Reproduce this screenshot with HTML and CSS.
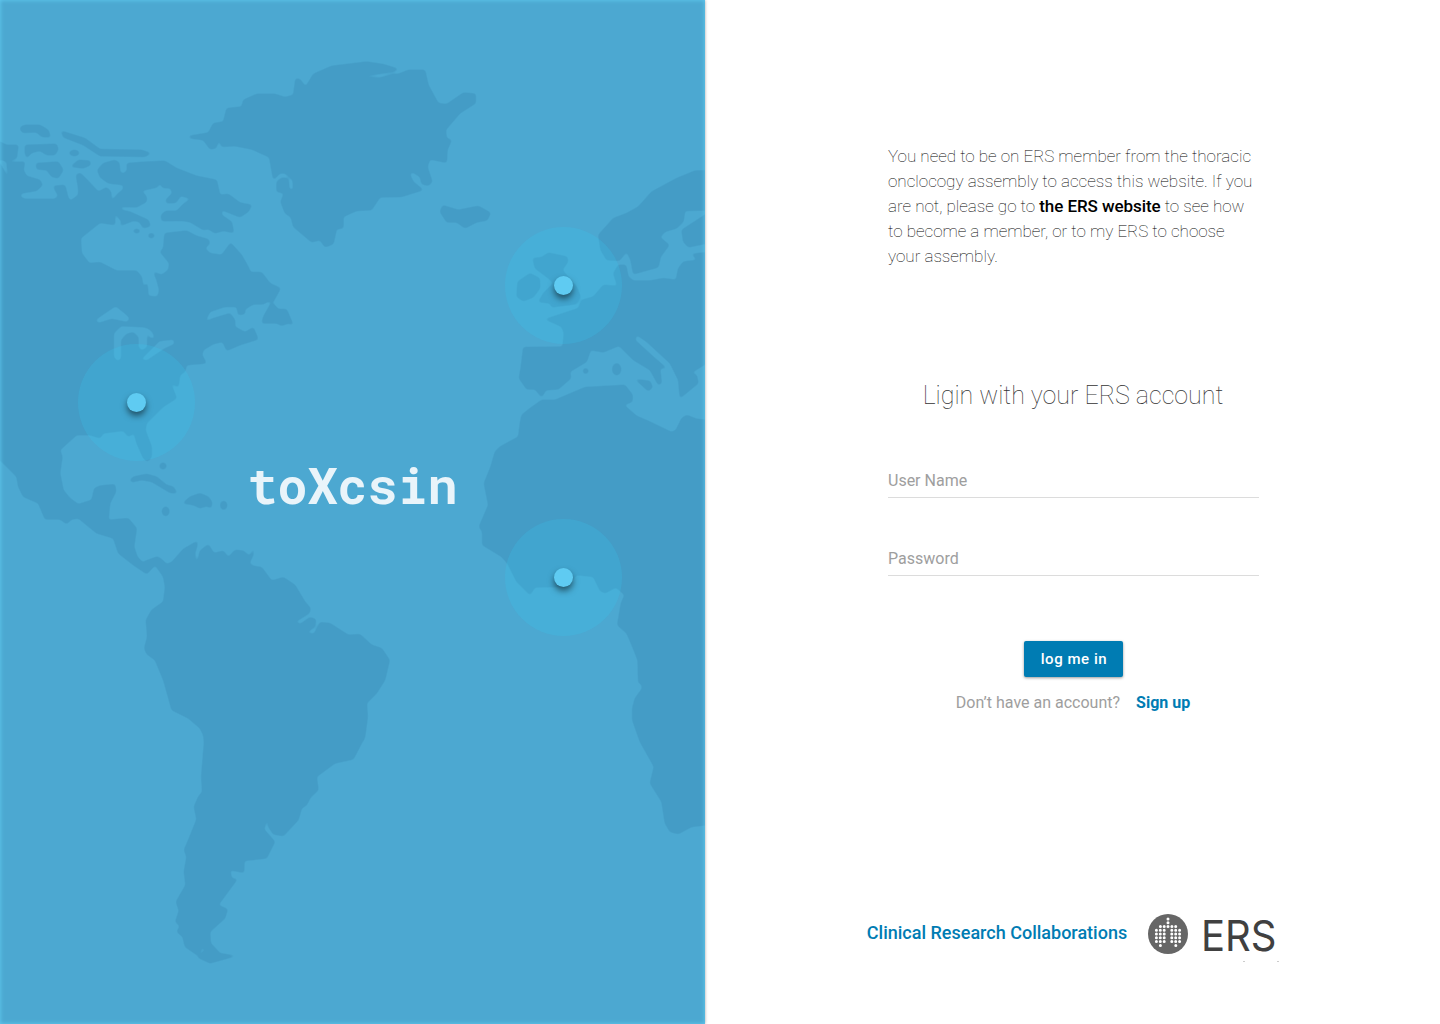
FILE: index.html
```html
<!DOCTYPE html>
<html lang="en">
<head>
<meta charset="utf-8">
<title>toXcsin</title>
<link rel="stylesheet" href="styles.css">
</head>
<body>
<main class="page">
  <section class="hero">
    <svg class="map" viewBox="0 0 2115 3072" aria-hidden="true">
      <defs>
      <!-- rounds off the coastline corners -->
      <filter id="round" filterUnits="userSpaceOnUse" x="-50" y="-50" width="2215" height="3172" color-interpolation-filters="sRGB">
        <feGaussianBlur stdDeviation="4.5"/>
        <feComponentTransfer>
          <feFuncR type="linear" slope="3" intercept="-.75"/>
          <feFuncG type="linear" slope="3" intercept="-.75"/>
          <feFuncB type="linear" slope="3" intercept="-.75"/>
        </feComponentTransfer>
      </filter>
      <mask id="continents" maskUnits="userSpaceOnUse" x="0" y="0" width="2115" height="3072">
      <g filter="url(#round)">
      <rect class="water" x="-50" y="-50" width="2215" height="3172"/>
      <!-- Canada and the Arctic -->
      <g transform="translate(0 300)">
        <g class="land">
          <path d="M-40 190L0 190L25 235L20 187L75 185L70 210L80 228L120 240L128 255L110 272L65 280L60 290L75 297L165 297L175 288L165 270L160 258L195 255L205 295L212 302L235 285L235 265L228 225L240 218L262 240L295 275L320 262L333 275L335 302L355 280L370 268L370 255L325 250L300 232L292 210L310 190L345 180L358 188L360 215L370 222L382 210L380 190L440 185L495 183L530 205L590 228L650 240L660 285L685 282L720 308L756 315L745 335L720 352L690 340L665 330L665 345L695 365L702 400L692 428L725 465L745 500L752 517L785 517L810 550L842 565L820 605L-40 605Z"/>
          <path d="M62 80L75 75L120 75L145 90L152 112L125 110L110 97L68 98L60 88Z"/>
          <path d="M-40 125L0 125L20 135L55 135L50 175L20 187L10 180L-40 178Z"/>
          <path d="M75 135L170 132L175 148L165 165L140 165L120 152L95 158L80 175L75 160Z"/>
          <path d="M108 190L175 185L190 210L175 235L155 230L140 210L110 208Z"/>
          <path d="M183 92L255 115L300 148L425 150L453 160L435 170L300 168L250 135L190 112Z"/>
          <path d="M212 200L235 180L270 182L272 195L250 205Z"/>
          <ellipse cx="223" cy="159" rx="15" ry="9"/>
        </g>
        <path class="water" d="M480 248L487 263L512 265L517 280L497 300L500 310L528 308L542 287L572 296L550 312L530 333L497 333L483 345L485 363L545 362L570 366L610 390L625 387L645 400L670 392L706 400L692 428L665 465L630 460L615 445L630 430L625 418L590 408L560 392L494 400L490 445L480 455L508 490L505 510L485 525L460 515L470 540L478 570L473 590L445 588L442 548L430 560L425 530L410 512L350 512L300 487L268 490L245 460L242 415L300 368L345 375L345 340L365 365L360 378L400 362L418 365L430 385L452 378L445 360L390 335L365 330L362 320L410 322L440 305L440 290L425 272L472 262Z"/>
        <g class="land"><ellipse cx="410" cy="393" rx="10" ry="6"/><ellipse cx="454" cy="407" rx="9" ry="7"/></g>
      </g>
      <!-- United States, Central America, Caribbean -->
      <g transform="translate(0 900)">
        <g class="land">
          <path d="M-40 -5L820 -5L810 0L790 13L760 13L735 28L735 42L715 45L710 20L675 20L630 35L615 65L640 55L690 40L705 60L705 80L735 97L760 82L775 118L720 135L680 152L668 125L640 132L610 150L606 165L620 190L560 195L555 215L540 225L535 262L513 250L530 295L490 320L440 370L436 390L455 440L455 470L443 485L430 475L410 430L402 400L385 410L370 392L310 400L300 415L270 405L230 405L180 450L187 470L180 520L190 570L210 595L235 613L275 600L283 565L300 557L345 553L348 575L330 610L325 660L385 655L410 685L402 740L412 770L430 790L475 770L500 795L520 785L520 860L497 870L490 830L465 795L440 822L400 795L355 760L340 715L290 700L235 655L215 658L200 672L180 658L135 658L115 610L70 590L55 560L50 530L0 480L-40 470Z"/>
          <path d="M815 5L835 28L860 28L880 75L865 70L845 77L830 70L785 70L790 50Z"/>
          <path d="M390 540L400 530L440 522L470 530L500 555L520 560L532 580L510 578L480 560L455 545L425 540L395 547Z"/>
          <path d="M548 610L570 590L600 580L625 590L636 605L634 625L620 618L600 625L580 615Z"/>
          <circle cx="489" cy="498" r="10"/><ellipse cx="497" cy="634" rx="11" ry="14"/><ellipse cx="671" cy="616" rx="10" ry="13"/>
        </g>
        <g class="water">
          <path d="M286 60L310 43L347 18L377 42L390 55L382 67L335 57L295 70Z"/>
          <path d="M341 100L363 78L430 81L447 86L460 100L464 117L450 114L442 100L442 142L425 152L415 142L415 112L400 97L380 102L364 120L364 177L352 184L341 172Z"/>
          <path d="M423 178L453 148L478 123L522 118L524 132L492 147L440 182Z"/>
        </g>
      </g>
      <!-- Greenland and Iceland -->
      <g class="land" transform="translate(540 120)">
        <path d="M26 288L85 278L100 250L130 245L140 205L185 200L190 180L230 162L285 162L315 172L340 165L347 115L360 118L377 140L400 102L455 78L560 65L610 73L656 87L640 95L540 110L600 113L640 102L655 102L685 90L735 90L745 135L775 190L800 193L850 158L887 161L887 190L840 220L797 270L800 295L815 300L802 330L800 368L750 358L742 380L757 425L745 437L725 432L720 410L695 395L690 405L700 425L730 450L665 470L600 472L575 510L530 512L490 530L490 565L470 567L460 612L435 622L420 600L395 607L340 560L333 532L315 520L302 485L312 460L290 455L290 425L305 413L325 415L328 448L340 450L338 420L315 400L300 400L280 420L268 352L215 328L165 318L125 320L117 300L108 325L90 328L70 300L30 295Z"/>
        <path d="M780 515L788 496L835 510L895 498L932 518L922 541L890 547L855 565L830 547L800 547Z"/>
      </g>
      <!-- South America -->
      <g class="land" transform="translate(360 1590)">
        <path d="M70 95L110 80L125 88L140 103L155 97L190 57L232 33L232 45L225 70L228 98L235 85L240 62L265 43L282 70L310 62L325 82L345 60L370 62L388 78L402 55L400 75L388 100L400 108L425 112L455 152L490 142L525 165L555 215L572 235L568 250L527 275L540 283L570 262L588 268L585 290L560 308L582 312L600 277L630 280L685 315L720 313L755 345L785 355L809 390L795 450L770 490L740 520L743 560L735 620L730 633L252 633L250 615L240 595L205 565L155 540L147 510L130 450L105 390L80 372L73 355L82 320L78 270L95 240L130 215L137 160L120 110L105 105L80 132Z"/>
      </g>
      <g class="land" transform="translate(420 2220)">
        <path d="M670 0L640 58L585 70L530 110L535 150L512 172L500 195L485 205L475 240L430 288L400 283L385 260L382 235L372 268L405 305L380 355L313 362L312 398L270 390L275 415L292 418L235 495L263 508L255 535L210 575L212 610L240 640L288 648L210 670L172 652L195 630L188 620L175 648L135 620L128 590L110 575L120 558L106 545L117 512L108 485L137 435L132 395L140 350L132 330L145 300L170 238L162 200L175 170L187 155L184 110L193 0Z"/>
      </g>
      <!-- Europe -->
      <g class="land" transform="translate(1260 450)">
        <path d="M900 60L825 62L770 85L695 125L655 170L620 190L580 205L535 255L542 300L560 330L598 332L620 305L632 330L640 373L715 352L722 320L748 285L720 262L735 245L770 235L790 215L795 182L900 180Z"/>
        <path d="M900 165L785 240L790 275L805 292L900 272Z"/>
        <path d="M900 303L815 312L832 330L790 335L775 355L768 390L730 385L690 392L640 392L625 380L618 345L595 345L580 370L592 408L550 405L520 440L485 450L475 475L375 508L425 530L432 550L428 590L310 592L303 650L297 685L320 718L345 718L365 742L378 720L415 718L453 685L450 665L500 635L512 600L550 607L597 587L640 630L690 660L715 705L725 700L720 655L740 655L700 620L645 570L650 555L680 575L750 640L775 690L780 745L835 700L830 675L815 668L860 640L900 620Z"/>
        <path d="M338 325L365 322L385 308L442 320L444 335L427 360L470 410L482 440L470 462L430 467L395 472L390 460L355 456L370 430L400 400L385 385L345 355Z"/>
        <path d="M293 395L330 370L359 385L360 415L340 442L310 454L290 440Z"/>
        <path d="M645 688L690 693L698 712L685 724L668 708Z"/>
        <circle cx="497" cy="663" r="8"/><ellipse cx="590" cy="658" rx="13" ry="18"/>
      </g>
      <!-- Africa -->
      <g class="land" transform="translate(1260 1200)">
        <path d="M300 70L305 45L330 25L365 0L405 0L495 -38L615 -45L638 -15L637 5L612 15L650 48L690 65L755 97L768 90L785 55L800 45L830 57L860 60L900 60L900 850L655 850L655 780L620 700L592 675L603 610L614 585L588 562L555 580L540 572L520 530L470 525L440 560L345 562L330 585L290 545L262 490L245 470L187 435L187 395L177 380L205 315L192 250L212 200L225 155L240 140L295 110Z"/>
      </g>
      <g class="land" transform="translate(1800 1920)">
        <path d="M90 0L113 60L115 105L127 145L105 175L97 205L97 240L120 305L162 380L150 430L185 485L195 550L210 575L235 582L275 560L320 555L360 555L360 0Z"/>
      </g>
      </g>
      </mask>
      </defs>
      <rect class="continents" width="2115" height="3072" mask="url(#continents)"/>
    </svg>
    <span class="pin pin-us"></span>
    <span class="pin pin-uk"></span>
    <span class="pin pin-africa"></span>
    <h1 class="brand">toXcsin</h1>
  </section>

  <section class="panel">
    <p class="intro">You need to be on ERS member from the thoracic<br>onclocogy assembly to access this website. If you<br>are not, please go to <a class="intro-link">the ERS website</a> to see how<br>to become a member, or to my ERS to choose<br>your assembly.</p>
    <form class="login">
      <h2 class="login-title">Ligin with your ERS account</h2>
      <input class="field" type="text" placeholder="User Name">
      <input class="field" type="password" placeholder="Password">
      <button class="submit" type="button">log me in</button>
      <p class="signup"><span>Don’t have an account?</span><a class="signup-link">Sign up</a></p>
    </form>
    <footer class="footer">
      <span class="crc">Clinical Research Collaborations</span>
      <svg class="ers" width="131" height="56" viewBox="0 0 131 56" role="img" aria-label="ERS">
        <circle cx="20" cy="27" r="20" fill="#666"/>
        <g class="dots">
          <path d="M20 5.2H20.1M20 8.9H20.1M20 12.6H20.1"/>
          <path d="M12.4 12.6H16.3M23.9 12.6H27.8"/>
          <path class="lung" d="M8.4 16.4H16.4M23.8 16.4H31.8"/>
          <path class="lung" d="M8.4 20.2H16.4M23.8 20.2H31.8"/>
          <path class="lung" d="M8.4 24H16.4M23.8 24H31.8"/>
          <path class="lung" d="M8.4 27.8H16.4M23.8 27.8H31.8"/>
          <path d="M12.4 31.6H12.5M27.8 31.6H27.9"/>
        </g>
        <text class="ers-name" x="53" y="43.5" textLength="75.5" lengthAdjust="spacingAndGlyphs">ERS</text>
        <path d="M95 54.5h2M129 54.5h2" stroke="#ccc" stroke-width="1"/>
      </svg>
    </footer>
  </section>
</main>
</body>
</html>
```

FILE: styles.css
```css
* { box-sizing: border-box; }
body { margin: 0; background: #fff; font-family: Roboto, "Liberation Sans", sans-serif; }
h1, h2, p { margin: 0; }

.page { display: flex; width: 1440px; height: 1024px; overflow: hidden; }

/* Map side */
.hero {
  position: relative;
  display: flex;
  justify-content: center;
  width: 705px;
  height: 1024px;
  background: #4ca8d1;
  box-shadow: 0 0 3px rgba(0, 0, 0, .35);
}
.hero::after {
  content: "";
  position: absolute;
  inset: 0;
  box-shadow: inset 0 0 4px #62cdf3;
}
.map { position: absolute; inset: 0; width: 705px; height: 1024px; }
.land { fill: #fff; }
.water { fill: #000; }
.continents { fill: #449cc6; }

.pin {
  position: absolute;
  width: 117px;
  height: 117px;
  border-radius: 50%;
  background: rgba(57, 207, 246, .2);
}
.pin::after {
  content: "";
  position: absolute;
  left: 49px;
  top: 49px;
  width: 19px;
  height: 19px;
  border-radius: 50%;
  background: #5fcbf2;
  box-shadow: 0 4px 6px rgba(0, 0, 0, .5);
}
.pin-us { left: 78px; top: 344px; }
.pin-uk { left: 505px; top: 227px; }
.pin-africa { left: 505px; top: 519px; }

.brand {
  position: relative;
  margin-top: 452px;
  height: 66px;
  font: 700 50px/66px "Roboto Mono", "DejaVu Sans Mono", monospace;
  color: #e9f4fa;
}

/* Login side */
.panel {
  flex: 1;
  display: flex;
  flex-direction: column;
  align-items: center;
  padding: 144px 0 0 2px;
}
.intro {
  width: 371px;
  font-size: 17px;
  font-weight: 100;
  line-height: 25px;
  color: #000;
  white-space: nowrap;
}
.intro-link { font-weight: 500; letter-spacing: -.07px; color: #000; }

.login { display: flex; flex-direction: column; align-items: center; width: 371px; margin-top: 107px; }
.login-title { height: 40px; padding-right: 1px; font-size: 25px; font-weight: 100; line-height: 40px; color: #333; white-space: nowrap; }
.field {
  width: 371px;
  height: 36px;
  padding: 2px 0 0;
  border: 0;
  border-bottom: 1px solid #dcdcdc;
  border-radius: 0;
  outline: 0;
  background: none;
  font: 400 16px/20px Roboto, "Liberation Sans", sans-serif;
}
.field::placeholder { color: #9e9e9e; opacity: 1; }
.login-title + .field { margin-top: 46px; }
.field + .field { margin-top: 42px; }
.submit {
  width: 99px;
  height: 36px;
  margin-top: 65px;
  padding: 0 0 0 1px;
  border: 0;
  border-radius: 2px;
  background: #007cb3;
  box-shadow: 0 1px 3px rgba(0, 0, 0, .4);
  font: 500 15px/36px Roboto, "Liberation Sans", sans-serif;
  letter-spacing: .55px;
  color: #fff;
}
.signup { display: flex; gap: 16px; margin-top: 14px; padding-right: 1px; font-size: 16px; line-height: 24px; color: #9e9e9e; white-space: nowrap; }
.signup-link { font-weight: 700; color: #007cb3; }

.footer { display: flex; align-items: center; gap: 21px; margin-top: 192px; padding-right: 1px; }
.crc { padding-bottom: 4px; font-size: 18px; font-weight: 500; line-height: 24px; color: #007cb3; white-space: nowrap; }
.ers { display: block; }
.dots { fill: none; stroke: #fff; stroke-width: 3; stroke-linecap: round; stroke-dasharray: 0 3.8; transform: translateY(6.8px); }
.lung { stroke-dasharray: 0 3.9; }
.ers-name { font-family: Inter, Roboto, sans-serif; font-size: 42px; font-weight: 400; fill: #404040; }
```
